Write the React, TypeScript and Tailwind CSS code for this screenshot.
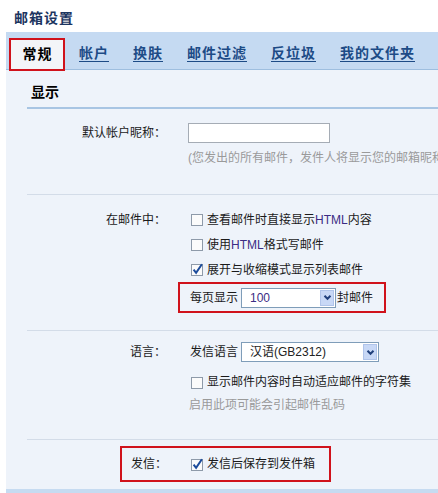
import React from 'react';

const Box = ({ checked }: { checked?: boolean }) => (
  <svg width="13" height="13" viewBox="0 0 13 13" className="shrink-0">
    <rect x="0.5" y="1.5" width="11" height="11" fill="#fbfbfb" stroke="#8e9aa9" />
    {checked && (
      <path d="M2.6 6.6 L5.1 9.8 L10.9 1.2" fill="none" stroke="#1c4c9c" strokeWidth="2" />
    )}
  </svg>
);

const Drop = ({ value, width, valueClass }: { value: React.ReactNode; width: string; valueClass: string }) => (
  <div className={`flex h-[20px] items-center border border-[#7f9db9] bg-white ${width}`}>
    <span className={`flex-1 pl-[8px] leading-[16px] ${valueClass}`}>{value}</span>
    <span className="mr-[1px] flex h-[16px] w-[14px] items-center justify-center border border-[#b0c4ea] bg-[#c8d8f6]">
      <svg width="9" height="7" viewBox="0 0 9 7">
        <path d="M1.5 1.8 L4.5 4.8 L7.5 1.8" fill="none" stroke="#21407c" strokeWidth="2" />
      </svg>
    </span>
  </div>
);

const CheckRow = ({ checked, children }: { checked?: boolean; children: React.ReactNode }) => (
  <div className="flex h-[25px] items-center pl-[3px]">
    <Box checked={checked} />
    <span className="ml-[3px] whitespace-nowrap">{children}</span>
  </div>
);

const Label = ({ children }: { children: React.ReactNode }) => (
  <div className="flex h-[25px] items-center justify-end whitespace-nowrap">{children}</div>
);

const tabs = ['帐户', '换肤', '邮件过滤', '反垃圾', '我的文件夹'];

export default function App() {
  return (
    <div className="h-[493px] w-[438px] overflow-hidden bg-white font-['Liberation_Sans','Noto_Sans_CJK_SC',sans-serif] text-[12px] text-[#1a1a1a]">
      <div className="h-[32px] pl-[14px] pt-[9px] text-[14px] font-bold leading-[18px] tracking-[1px] text-[#1c3560]">
        邮箱设置
      </div>

      <div className="ml-[6px] bg-[#eef3fa]">
        {/* tab bar */}
        <div className="flex h-[38px] items-center border-b border-[#9ebedf] bg-[#c5daf2] pt-[5px]">
          <div className="mb-[-2px] ml-[3px] flex h-[33px] w-[56px] items-center justify-center self-end border-2 border-[#d0121b] bg-[#f3f5f8] pl-[1px] text-[14px] font-bold tracking-[1px] text-black">
            常规
          </div>
          {tabs.map((t, i) => (
            <span
              key={t}
              className={`${i === 0 ? 'ml-[14px]' : 'ml-[24px]'} text-[14px] font-bold tracking-[1px] text-[#1d4b86] underline underline-offset-[3px]`}
            >
              {t}
            </span>
          ))}
        </div>

        <div className="pl-[21px]">
          <div className="h-[39px] border-b-2 border-[#a8c5e3] pl-[4px] pt-[14px] text-[14px] font-bold leading-[16px] text-black">
            显示
          </div>

          {/* nickname */}
          <div className="grid grid-cols-[139px_1fr] gap-x-[22px] border-b border-[#d3dce8] pb-[28px] pt-[14px]">
            <div className="flex h-[20px] items-center justify-end whitespace-nowrap">默认帐户昵称：</div>
            <div>
              <div className="h-[20px] w-[142px] border border-[#a5acb5] bg-white" />
              <div className="mt-[7px] whitespace-nowrap leading-[16px] text-[#9a9a9a]">
                (您发出的所有邮件，发件人将显示您的邮箱昵称)
              </div>
            </div>
          </div>

          {/* in mail */}
          <div className="grid grid-cols-[139px_1fr] gap-x-[22px] border-b border-[#d3dce8] pb-[17px] pt-[12px]">
            <div>
              <Label>在邮件中：</Label>
            </div>
            <div>
              <CheckRow>
                查看邮件时直接显示<span className="text-[#3b2c84]">HTML</span>内容
              </CheckRow>
              <CheckRow>
                使用<span className="text-[#3b2c84]">HTML</span>格式写邮件
              </CheckRow>
              <CheckRow checked>展开与收缩模式显示列表邮件</CheckRow>
              <div className="ml-[-10px] flex h-[31px] w-[208px] items-center border-2 border-[#d0121b] pl-[10px]">
                <span className="whitespace-nowrap">每页显示</span>
                <div className="ml-[3px]">
                  <Drop value="100" width="w-[95px]" valueClass="text-[#3b2c84]" />
                </div>
                <span className="ml-[1px] whitespace-nowrap">封邮件</span>
              </div>
            </div>
          </div>

          {/* language */}
          <div className="grid grid-cols-[139px_1fr] gap-x-[22px] border-b border-[#d3dce8] pb-[23px] pt-[10px]">
            <div className="flex h-[22px] items-center justify-end whitespace-nowrap">语言：</div>
            <div>
              <div className="flex h-[22px] items-center pl-[2px]">
                <span className="whitespace-nowrap">发信语言</span>
                <div className="ml-[3px]">
                  <Drop value="汉语(GB2312)" width="w-[138px]" valueClass="text-[#222]" />
                </div>
              </div>
              <div className="mt-[7px] flex h-[24px] items-center pl-[3px]">
                <Box />
                <span className="ml-[3px] whitespace-nowrap">显示邮件内容时自动适应邮件的字符集</span>
              </div>
              <div className="flex h-[22px] items-center pl-[1px] text-[#9a9a9a]">启用此项可能会引起邮件乱码</div>
            </div>
          </div>

          {/* sending */}
          <div className="pb-[7px] pt-[6px]">
            <div className="ml-[93px] flex h-[36px] w-[211px] items-center border-2 border-[#d0121b] pl-[9px]">
              <span className="w-[36px] whitespace-nowrap">发信：</span>
              <span className="ml-[24px]">
                <Box checked />
              </span>
              <span className="ml-[3px] whitespace-nowrap">发信后保存到发件箱</span>
            </div>
          </div>
        </div>
        <div className="h-[10px] bg-[#c6dbf1]" />
      </div>
    </div>
  );
}
